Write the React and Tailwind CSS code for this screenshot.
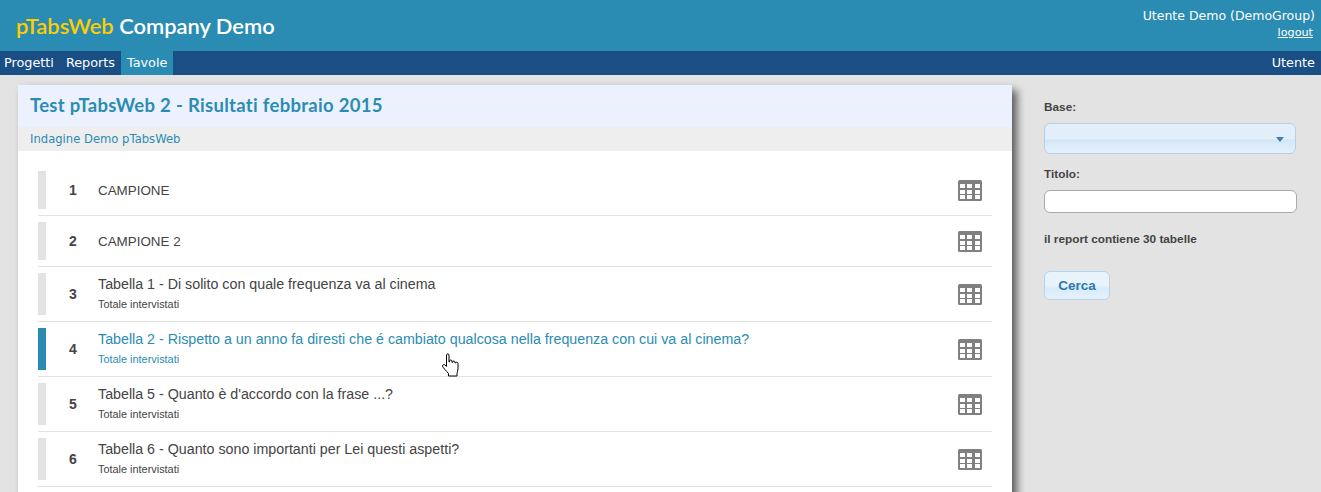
import React from 'react';

const rows = [
    { n: 1, title: 'CAMPIONE' },
    { n: 2, title: 'CAMPIONE 2' },
    { n: 3, title: 'Tabella 1 - Di solito con quale frequenza va al cinema', sub: 'Totale intervistati' },
    { n: 4, title: 'Tabella 2 - Rispetto a un anno fa diresti che é cambiato qualcosa nella frequenza con cui va al cinema?', sub: 'Totale intervistati', active: true },
    { n: 5, title: "Tabella 5 - Quanto è d'accordo con la frase ...?", sub: 'Totale intervistati' },
    { n: 6, title: 'Tabella 6 - Quanto sono importanti per Lei questi aspetti?', sub: 'Totale intervistati' },
];

const TableIcon = () => (
    <svg width="24" height="21" viewBox="0 0 24 21" className="block">
        <rect width="24" height="21" rx="1.5" fill="#808080" />
        {[2, 9, 17].map((x) =>
            [4, 10, 15].map((y) => <rect key={`${x}-${y}`} x={x} y={y} width="5" height="4" fill="#fff" />)
        )}
    </svg>
);

const HandCursor = () => (
    <svg width="18" height="24" viewBox="0 0 18 24" className="absolute left-[442px] top-[353px]">
        <path
            d="M4.500 2c0-1.500 2.500-1.500 2.500 0v7h.5V8c0-1.300 2.500-1.300 2.500 0v1.500h.5V9c0-1.300 2.500-1.300 2.500 0v1h.5c0-1.200 2.500-1 2.500.3V16c0 2-1 3-1 4.500V23H6.500v-2.500C5 18.500 1 15 .5 13c0-1.500 1.500-1.800 2.500-1l1.500 1.500z"
            fill="#fff"
            stroke="#000"
            strokeWidth="1"
            strokeLinejoin="round"
        />
    </svg>
);

const Row = ({ row }) => (
    <div className="flex items-stretch border-b border-[#e3e3e3] py-[6px]">
        <div className={`w-[8px] shrink-0 ${row.active ? 'bg-[#2b8cb3]' : 'bg-[#e3e3e3]'}`} />
        <div className="ml-[10px] w-[34px] shrink-0 flex items-center justify-center text-[14px] font-bold text-[#444]">{row.n}</div>
        <div className={`ml-[8px] flex-1 flex flex-col justify-center ${row.active ? 'text-[#2b8cb3]' : 'text-[#444]'} ${row.sub ? 'min-h-[42px]' : 'min-h-[38px]'}`}>
            <div className={`${row.sub ? 'text-[14.25px] -mt-[3px]' : 'text-[13.4px] mt-[1px]'} leading-[22px]`}>{row.title}</div>
            {row.sub && <div className="text-[10.9px] leading-[16px] mt-[1px]">{row.sub}</div>}
        </div>
        <div className="flex items-center pr-[10px]">
            <TableIcon />
        </div>
    </div>
);

export default function App() {
    return (
        <div className="relative h-[492px] overflow-hidden bg-[#e3e3e3] font-['Liberation_Sans',Arial,sans-serif]">
            <div className="h-[51px] bg-[#2b8cb3] flex justify-between pl-[16px] pr-[6px]">
                <div className="text-[21.9px] leading-[52px] text-white font-semibold font-['Lato',sans-serif]">
                    <span className="text-[#ffcc00]">pTabsWeb</span> Company Demo
                </div>
                <div className="pt-[7px] text-right text-white font-['DejaVu_Sans',sans-serif]">
                    <div className="text-[12.5px] leading-[18px]">Utente Demo (DemoGroup)</div>
                    <a className="block underline text-[11.2px] leading-[16px] pr-[2px]">logout</a>
                </div>
            </div>
            <div className="h-[24px] bg-[#1a4f86] flex justify-between text-[12.8px] leading-[24px] text-white font-['DejaVu_Sans',sans-serif]">
                <div className="flex">
                    <div className="pl-[4px] pr-[6px]">Progetti</div>
                    <div className="px-[6px]">Reports</div>
                    <div className="px-[6px] bg-[#2b8cb3]">Tavole</div>
                </div>
                <div className="pr-[6px]">Utente</div>
            </div>
            <div className="flex pt-[10px] pl-[18px]">
                <div className="w-[994px] shrink-0 bg-white shadow-[5px_5px_8px_rgba(0,0,0,0.6)]">
                    <div className="h-[42px] bg-[#ebf2fe] pl-[12px] text-[18.5px] tracking-[0.3px] leading-[40px] font-bold text-[#2b8cb3] font-['Lato',sans-serif]">
                        Test pTabsWeb 2 - Risultati febbraio 2015
                    </div>
                    <div className="h-[24px] bg-[#eeeeee] pl-[12px] text-[11.6px] leading-[25px] text-[#2b8cb3] font-['DejaVu_Sans',sans-serif]">
                        Indagine Demo pTabsWeb
                    </div>
                    <div className="pt-[14px] pl-[20px] pr-[20px] pb-[20px]">
                        {rows.map((row) => (
                            <Row key={row.n} row={row} />
                        ))}
                    </div>
                </div>
                <div className="w-[253px] ml-[32px] pt-[14px] text-[11.8px] font-bold text-[#444]">
                    <div className="leading-[16px]">Base:</div>
                    <div className="relative mt-[8px] w-[252px] h-[31px] rounded-[6px] border border-[#b5cfe6] bg-[linear-gradient(#e2effa_50%,#d3e6f7_55%,#e6f2fb)]">
                        <div className="absolute right-[11px] top-[13px] w-0 h-0 border-x-[4px] border-t-[5px] border-x-transparent border-t-[#3f7fb5]" />
                    </div>
                    <div className="mt-[12px] leading-[16px]">Titolo:</div>
                    <div className="mt-[8px] h-[23px] rounded-[6px] border border-[#aaa] bg-white" />
                    <div className="mt-[18px] leading-[16px]">il report contiene 30 tabelle</div>
                    <div className="mt-[24px] w-[66px] h-[29px] rounded-[6px] border border-[#b5d5ee] bg-[linear-gradient(#e8f3fc_50%,#d9eafa_60%,#e6f2fb)] text-center text-[13.5px] leading-[27px] text-[#2a78ad]">
                        Cerca
                    </div>
                </div>
            </div>
            <HandCursor />
        </div>
    );
}
